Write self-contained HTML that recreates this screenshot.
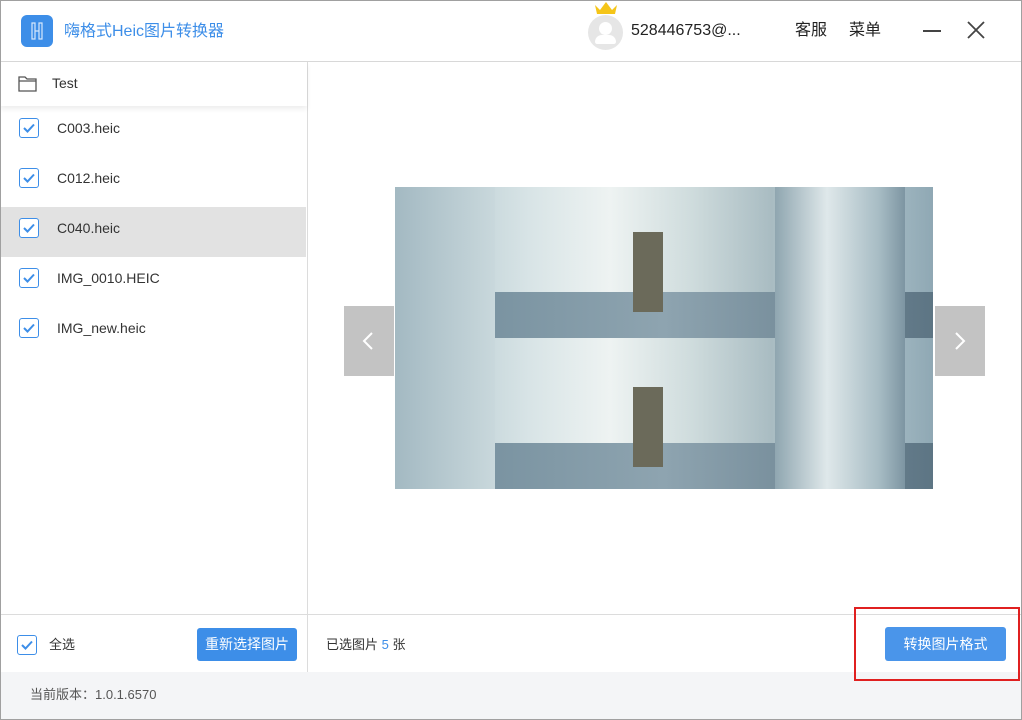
<!DOCTYPE html><html><head><meta charset="utf-8"><style>
*{margin:0;padding:0;box-sizing:border-box}
body{width:1022px;height:720px;position:relative;background:#fff;font-family:"Liberation Sans","Noto Sans CJK SC",sans-serif;overflow:hidden}
.a{position:absolute}
.cb{position:absolute;left:19px;width:20px;height:20px;border:1.5px solid #3d8ee8;border-radius:3px;background:#fff}
.cb svg{position:absolute;left:3px;top:4px}
.it{position:absolute;left:0;width:306px;height:50px;font-size:14px;color:#333}
.it span{position:absolute;left:57px;top:13px}
</style></head><body>
<div class="a" style="left:0;top:0;width:1022px;height:720px;border:1px solid #a0a0a0;z-index:9;pointer-events:none"></div>
<div class="a" style="left:21px;top:15px;width:32px;height:32px;background:#3d8ee8;border-radius:6px"></div>
<svg class="a" style="left:29px;top:22px" width="16" height="18"><path d="M3 1h3v16H3zM10 1h3v16h-3z M6 9h4" fill="none" stroke="#d6e7fc" stroke-width="1.2"/></svg>
<div class="a" style="left:64px;top:20px;font-size:16px;color:#3d8ee8;line-height:24px">嗨格式Heic图片转换器</div>
<div class="a" style="left:588px;top:15px;width:35px;height:35px;border-radius:50%;background:#e6e6e6"></div>
<div class="a" style="left:599px;top:22px;width:13px;height:13px;border-radius:50%;background:#fff"></div>
<div class="a" style="left:595px;top:35px;width:21px;height:9px;border-radius:10px 10px 3px 3px;background:#fff"></div>
<svg class="a" style="left:593px;top:1px" width="26" height="14"><path d="M2 4 L7 9 L13 1 L19 9 L24 4 L22 13 L4 13Z" fill="#f5c518"/></svg>
<div class="a" style="left:631px;top:20px;font-size:16px;color:#222;line-height:22px">528446753@...</div>
<div class="a" style="left:795px;top:19px;font-size:16px;color:#222;line-height:24px">客服</div>
<div class="a" style="left:849px;top:19px;font-size:16px;color:#222;line-height:24px">菜单</div>
<div class="a" style="left:923px;top:30px;width:18px;height:1.5px;background:#444"></div>
<svg class="a" style="left:966px;top:20px" width="20" height="20"><path d="M2 2L18 18M18 2L2 18" stroke="#444" stroke-width="1.8"/></svg>
<div class="a" style="left:0;top:61px;width:1022px;height:1px;background:#d8d8d8"></div>
<div class="a" style="left:307px;top:62px;width:1px;height:610px;background:#dcdcdc"></div>
<div class="a" style="left:0;top:62px;width:307px;height:44px;background:#fff;box-shadow:0 3px 5px rgba(0,0,0,.07);z-index:2"></div>
<svg class="a" style="left:18px;top:75px;z-index:3" width="20" height="17"><path d="M1 2h6l2 2h9v12H1z M1 6h17" fill="none" stroke="#555" stroke-width="1.3"/></svg>
<div class="a" style="left:52px;top:75px;font-size:14px;color:#333;z-index:3">Test</div>
<div class="it" style="top:107px"><span>C003.heic</span></div>
<div class="it" style="top:157px"><span>C012.heic</span></div>
<div class="it" style="top:207px;background:#e2e2e2"><span>C040.heic</span></div>
<div class="it" style="top:257px"><span>IMG_0010.HEIC</span></div>
<div class="it" style="top:307px"><span>IMG_new.heic</span></div>
<div class="cb" style="top:118px"><svg width="12" height="10"><path d="M1 5l3.5 3.5L11 1.5" fill="none" stroke="#3d8ee8" stroke-width="2"/></svg></div>
<div class="cb" style="top:168px"><svg width="12" height="10"><path d="M1 5l3.5 3.5L11 1.5" fill="none" stroke="#3d8ee8" stroke-width="2"/></svg></div>
<div class="cb" style="top:218px"><svg width="12" height="10"><path d="M1 5l3.5 3.5L11 1.5" fill="none" stroke="#3d8ee8" stroke-width="2"/></svg></div>
<div class="cb" style="top:268px"><svg width="12" height="10"><path d="M1 5l3.5 3.5L11 1.5" fill="none" stroke="#3d8ee8" stroke-width="2"/></svg></div>
<div class="cb" style="top:318px"><svg width="12" height="10"><path d="M1 5l3.5 3.5L11 1.5" fill="none" stroke="#3d8ee8" stroke-width="2"/></svg></div>
<!-- image -->
<div class="a" style="left:395px;top:187px;width:538px;height:302px;background:linear-gradient(#c9d8dc,#8ea6b2);overflow:hidden">
<div class="a" style="left:0;top:0;width:538px;height:151px;background:linear-gradient(90deg,#a9c0c8 0,#d8e4e6 25%,#eef3f2 40%,#cfdcdd 55%,#a9bcc2 70%,#c0d2d8 80%,#8fa8b4 100%)"></div>
<div class="a" style="left:0;top:151px;width:538px;height:151px;background:linear-gradient(90deg,#a9c0c8 0,#d8e4e6 25%,#eef3f2 40%,#cfdcdd 55%,#a9bcc2 70%,#c0d2d8 80%,#8fa8b4 100%)"></div>
<div class="a" style="left:0;top:105px;width:538px;height:46px;background:linear-gradient(90deg,#6f8a99,#8ea4b0 50%,#5d7584)"></div>
<div class="a" style="left:0;top:256px;width:538px;height:46px;background:linear-gradient(90deg,#6f8a99,#8ea4b0 50%,#5d7584)"></div>
<div class="a" style="left:380px;top:0;width:130px;height:151px;background:linear-gradient(90deg,#8fa6b0,#dfe8ea 40%,#a7bcc4 80%,#7d95a2)"></div>
<div class="a" style="left:380px;top:151px;width:130px;height:151px;background:linear-gradient(90deg,#8fa6b0,#dfe8ea 40%,#a7bcc4 80%,#7d95a2)"></div>
<div class="a" style="left:0;top:0;width:100px;height:151px;background:linear-gradient(90deg,#a3b9c2,#c9d8dc)"></div>
<div class="a" style="left:0;top:151px;width:100px;height:151px;background:linear-gradient(90deg,#a3b9c2,#c9d8dc)"></div>
<div class="a" style="left:238px;top:45px;width:30px;height:80px;background:#6b6a5a"></div>
<div class="a" style="left:238px;top:200px;width:30px;height:80px;background:#6b6a5a"></div>
</div>
<div class="a" style="left:344px;top:306px;width:50px;height:70px;background:rgba(170,170,170,.7)"></div>
<svg class="a" style="left:361px;top:331px" width="14" height="20"><path d="M11 2L3 10l8 8" fill="none" stroke="#fff" stroke-width="2"/></svg>
<div class="a" style="left:935px;top:306px;width:50px;height:70px;background:rgba(170,170,170,.7)"></div>
<svg class="a" style="left:953px;top:331px" width="14" height="20"><path d="M3 2l8 8-8 8" fill="none" stroke="#fff" stroke-width="2"/></svg>
<!-- bottom -->
<div class="a" style="left:0;top:614px;width:1022px;height:1px;background:#dcdcdc"></div>
<div class="cb" style="top:635px;left:17px"><svg width="12" height="10"><path d="M1 5l3.5 3.5L11 1.5" fill="none" stroke="#3d8ee8" stroke-width="2"/></svg></div>
<div class="a" style="left:49px;top:635px;font-size:13px;color:#333;line-height:20px">全选</div>
<div class="a" style="left:197px;top:628px;width:100px;height:33px;background:#3d8ee8;border-radius:3px;color:#fff;font-size:14px;text-align:center;line-height:33px">重新选择图片</div>
<div class="a" style="left:326px;top:635px;font-size:13px;color:#333;line-height:20px">已选图片 <span style="color:#3d8ee8">5</span> 张</div>
<div class="a" style="left:885px;top:627px;width:121px;height:34px;background:#4a95ea;border-radius:3px;color:#fff;font-size:14px;text-align:center;line-height:34px">转换图片格式</div>
<div class="a" style="left:854px;top:607px;width:166px;height:74px;border:2px solid #e02020;z-index:5"></div>
<div class="a" style="left:0;top:672px;width:1022px;height:48px;background:#f4f5f7"></div>
<div class="a" style="left:30px;top:685px;font-size:13px;color:#555;line-height:20px">当前版本：1.0.1.6570</div>
</body></html>
